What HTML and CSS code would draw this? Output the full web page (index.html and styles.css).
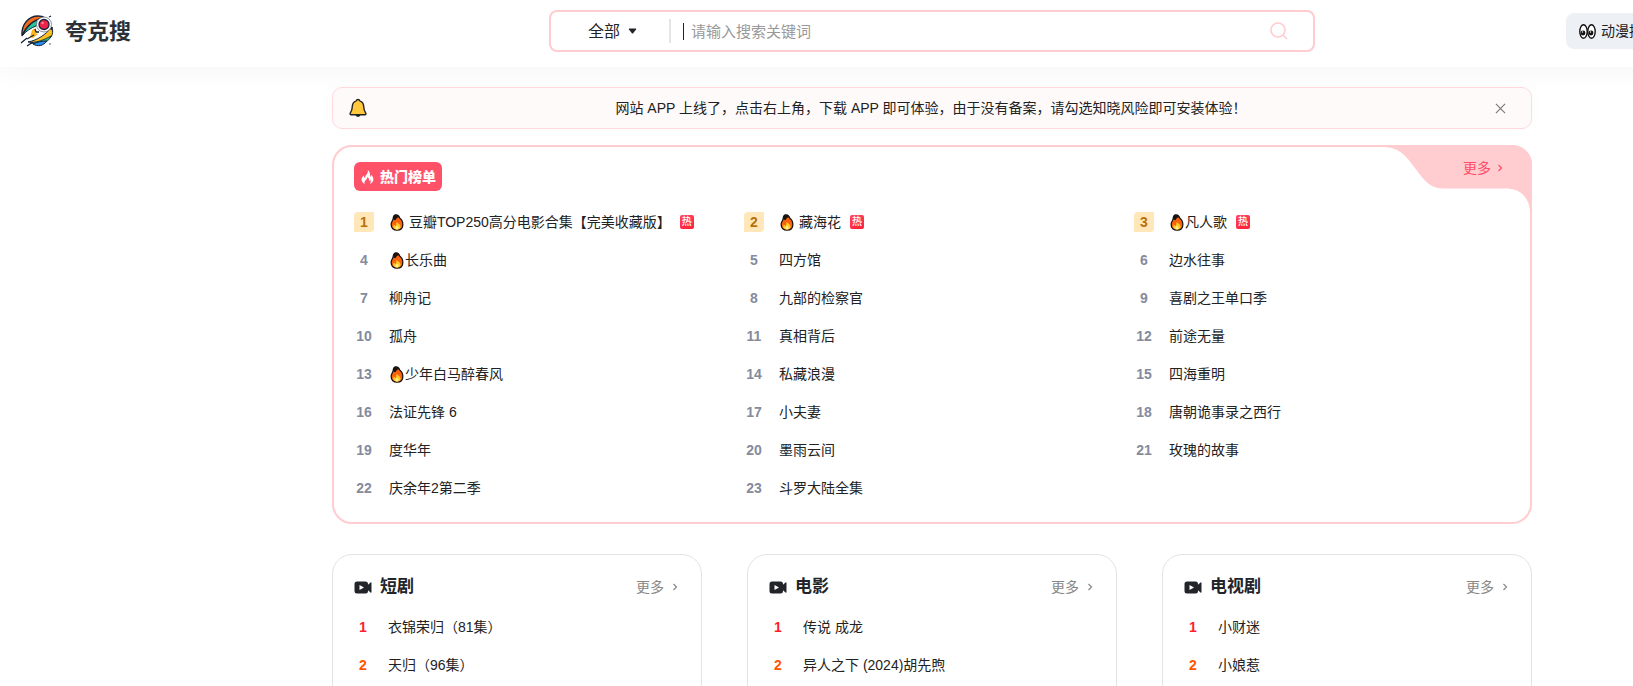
FILE: index.html
```html
<!DOCTYPE html>
<html lang="zh-CN">
<head>
<meta charset="utf-8">
<title>夸克搜</title>
<link rel="stylesheet" href="styles.css">
</head>
<body>
<svg class="sprite" aria-hidden="true">
  <symbol id="fire" viewBox="0 0 14 18">
    <path d="M5.2 1C7.800.600 9.200 2 9.800 4.200 12 5.800 13.200 8.400 13.200 11.200c0 3.800-2.600 6-6.200 6S.800 14.800.800 11.200C.800 8.800 2 7.200 2.800 5.600 3 3.600 3.400 1.600 5.200 1z" fill="#f7630c" stroke="#111" stroke-width="1.300"/>
    <path d="M3 5.500C3 3 4 1.200 6 1.100c1.600 0 2.600 1 3 2.600-1.600 0-2.600.4-3 2-1 1-2 .8-3-.2z" fill="#181210"/>
    <path d="M6.400 8.400c2 1.200 4.400 3 4.400 5.200 0 2-1.600 2.900-3.800 2.900S3 15.600 3 13.600c0-1 .2-1.600.6-2.400l1.800 1.600c.8-1.200 1.200-2.800 1-4.400z" fill="#ffc928"/>
    <path d="M7 12.400c1 .8 1.800 1.600 1.800 2.500 0 1-.8 1.500-1.800 1.500s-1.800-.5-1.800-1.500c0-.9.800-1.700 1.800-2.500z" fill="#fff08a"/>
  </symbol>
  <symbol id="video" viewBox="0 0 18 13">
    <path d="M3 .5h8.500A2.500 2.500 0 0 1 14 3v.8L16.500 1.500q1-.6 1 .6v8.800q0 1.200-1 .6L14 9.200V10a2.500 2.500 0 0 1-2.500 2.500H3A2.500 2.500 0 0 1 .5 10V3A2.500 2.500 0 0 1 3 .5zM5.500 4v5L10 6.500z" fill="#212529" fill-rule="evenodd"/>
  </symbol>
  <symbol id="chevron" viewBox="0 0 6 8">
    <path d="M1.500 1l3 3-3 3" fill="none" stroke="currentColor" stroke-width="1.200"/>
  </symbol>
</svg>
<div class="page">
  <header class="header">
    <a class="brand" href="#">
      <svg class="brand-logo" viewBox="0 0 34 32" aria-hidden="true">
        <path d="M2 21C1 9 9 1 18 1c3 0 5 .5 6 1.500C14 5 6 11 2 21z" fill="#f26a1b" stroke="#16233b" stroke-width="1.300"/>
        <path d="M3 20C7 12 12 7 18 5l-2 6C11 13 6 16 3 20z" fill="#24c79b" stroke="#16233b"/>
        <path d="M12 15l4-2-1 5 3 1-5 4-3-1z" fill="#ffb31a"/>
        <path d="M8 27c10-2 17-7 24-15 1 4 1 7-1 10-7 5-15 6-23 5z" fill="#ffc01f" stroke="#16233b"/>
        <path d="M10 28c8-1 14-3 21-7-1 3-3 5-6 6-5 2-10 2-15 1z" fill="#25b67f" stroke="#16233b" stroke-width=".8"/>
        <path d="M13 29c4-2 9-3 14-3-4 5-9 6-14 3z" fill="#2690ee" stroke="#16233b"/>
        <path d="M17 5c0 6 3 12 8 13l6-5-2-10z" fill="#fff"/>
        <circle cx="24" cy="9.500" r="7.500" fill="#fff" stroke="#6b7485" stroke-width=".8"/>
        <circle cx="24" cy="9.500" r="5" fill="#ed2447" stroke="#16233b" stroke-width="1.300"/>
        <circle cx="22.500" cy="8" r="1.300" fill="#ff7f8d"/>
        <path d="M15 14l1 3h3M7 24l7-4M1 28l6-5M7 31l6-4M29 2l2-1M31 15l1-3" fill="none" stroke="#16233b" stroke-width="1.300"/>
        <circle cx="30" cy="29" r="1" fill="#8a93a0"/>
      </svg>
      <span class="brand-name">夸克搜</span>
    </a>
    <form class="search">
      <select class="search-type" aria-label="搜索分类"><option>全部</option></select>
      <svg class="search-caret" viewBox="0 0 8 6" aria-hidden="true"><path d="M1 .5h6q1 0 .6.900L4.800 5q-.8 1-1.600 0L.4 1.400Q0 .5 1 .5z" fill="#212529"/></svg>
      <span class="search-divider"></span>
      <span class="search-cursor"></span>
      <input class="search-input" type="text" aria-label="搜索" placeholder="请输入搜索关键词">
      <button class="search-button" type="submit" aria-label="搜索">
        <svg viewBox="0 0 18 18" aria-hidden="true"><circle cx="8" cy="8" r="7" /><path d="M13 13l4 4"/></svg>
      </button>
    </form>
    <a class="nav-chip" href="#">
      <svg viewBox="0 0 17 15" aria-hidden="true">
        <g fill="#fff" stroke="#111" stroke-width="1.400"><ellipse cx="4.500" cy="7.500" rx="3.700" ry="6.700"/><ellipse cx="12.500" cy="7.500" rx="3.700" ry="6.700"/></g>
        <circle cx="4" cy="9" r="2.400" fill="#111"/><circle cx="12" cy="9" r="2.400" fill="#111"/>
        <circle cx="3.500" cy="8" r=".7" fill="#fff"/><circle cx="11.500" cy="8" r=".7" fill="#fff"/>
      </svg>
      <span>动漫推荐</span>
    </a>
  </header>

  <main class="main">
    <div class="notice">
      <svg class="notice-bell" viewBox="0 0 18 20" aria-hidden="true">
        <path d="M6.500 16.500a2.500 2.500 0 0 0 5 0z" fill="#222"/>
        <path d="M9 1.500c1 0 1.600.6 1.800 1.300C13.400 3.600 14.600 5.800 14.700 8.500c.1 3.500.6 4.700 2 6.500.6 1 .2 1.700-.9 1.700H2.200c-1.100 0-1.500-.7-.9-1.700 1.400-1.800 1.900-3 2-6.500.1-2.700 1.300-4.900 3.900-5.700C7.400 2.100 8 1.500 9 1.500z" fill="#ffc83d" stroke="#222" stroke-width="1.400"/>
      </svg>
      <p class="notice-text">网站 APP 上线了，点击右上角，下载 APP 即可体验，由于没有备案，请勾选知晓风险即可安装体验！</p>
      <button class="notice-close" type="button" aria-label="关闭"><svg viewBox="0 0 12 12" aria-hidden="true"><path d="M1 1l10 10M11 1L1 11"/></svg></button>
    </div>

    <section class="hot">
      <svg class="hot-tab" viewBox="0 0 152 68" aria-hidden="true"><path d="M0 0H132A20 20 0 0 1 152 20V68H150C150 53 140 43.500 127 43.500H63C54 43.500 47 39 41 31L28 14C21 6 14 2 3 2H0Z" fill="#ffcccf"/></svg>
      <a class="hot-more" href="#">更多 <svg class="chevron"><use href="#chevron"/></svg></a>
      <h2 class="hot-title">
        <svg viewBox="0 0 13 14" aria-hidden="true"><path d="M6.800 0C7.300 2.400 6.200 3.900 5 5.200 4.200 6.200 4 7 4.300 8.200 3.300 7.700 2.900 6.700 3 5.400 1.300 6.600.4 8.200.6 10 .8 11.800 2 13.200 3.600 14 3 12 4 10.800 5.200 9.600c.7-.7 1.200-1.500 1.200-2.500 1.500 1 2 2.300 1.500 3.900.7-.2 1.100-.7 1.300-1.500.9 1.600.6 3.100-.4 4.500 2-.8 3.500-2.300 3.600-4.500.1-2-1-3.500-2.200-4.800-.1 1-.4 1.600-1.100 2C9.300 4.200 8.800 1.600 6.800 0z" fill="#fff"/></svg>
        <span>热门榜单</span>
      </h2>
      <ol class="hot-list">
        <li><b class="rank top">1</b><a href="#"><svg class="fire"><use href="#fire"/></svg> 豆瓣TOP250高分电影合集【完美收藏版】</a><i class="tag">热</i></li>
        <li><b class="rank top">2</b><a href="#"><svg class="fire"><use href="#fire"/></svg> 藏海花</a><i class="tag">热</i></li>
        <li><b class="rank top">3</b><a href="#"><svg class="fire"><use href="#fire"/></svg>凡人歌</a><i class="tag">热</i></li>
        <li><b class="rank">4</b><a href="#"><svg class="fire"><use href="#fire"/></svg>长乐曲</a></li>
        <li><b class="rank">5</b><a href="#">四方馆</a></li>
        <li><b class="rank">6</b><a href="#">边水往事</a></li>
        <li><b class="rank">7</b><a href="#">柳舟记</a></li>
        <li><b class="rank">8</b><a href="#">九部的检察官</a></li>
        <li><b class="rank">9</b><a href="#">喜剧之王单口季</a></li>
        <li><b class="rank">10</b><a href="#">孤舟</a></li>
        <li><b class="rank">11</b><a href="#">真相背后</a></li>
        <li><b class="rank">12</b><a href="#">前途无量</a></li>
        <li><b class="rank">13</b><a href="#"><svg class="fire"><use href="#fire"/></svg>少年白马醉春风</a></li>
        <li><b class="rank">14</b><a href="#">私藏浪漫</a></li>
        <li><b class="rank">15</b><a href="#">四海重明</a></li>
        <li><b class="rank">16</b><a href="#">法证先锋 6</a></li>
        <li><b class="rank">17</b><a href="#">小夫妻</a></li>
        <li><b class="rank">18</b><a href="#">唐朝诡事录之西行</a></li>
        <li><b class="rank">19</b><a href="#">度华年</a></li>
        <li><b class="rank">20</b><a href="#">墨雨云间</a></li>
        <li><b class="rank">21</b><a href="#">玫瑰的故事</a></li>
        <li><b class="rank">22</b><a href="#">庆余年2第二季</a></li>
        <li><b class="rank">23</b><a href="#">斗罗大陆全集</a></li>
      </ol>
    </section>

    <div class="cards">
      <section class="card">
        <div class="card-head"><svg class="video"><use href="#video"/></svg><h2>短剧</h2><a class="card-more" href="#">更多 <svg class="chevron"><use href="#chevron"/></svg></a></div>
        <ol class="card-list">
          <li><b class="rank first">1</b><a href="#">衣锦荣归（81集）</a></li>
          <li><b class="rank second">2</b><a href="#">天归（96集）</a></li>
        </ol>
      </section>
      <section class="card">
        <div class="card-head"><svg class="video"><use href="#video"/></svg><h2>电影</h2><a class="card-more" href="#">更多 <svg class="chevron"><use href="#chevron"/></svg></a></div>
        <ol class="card-list">
          <li><b class="rank first">1</b><a href="#">传说 成龙</a></li>
          <li><b class="rank second">2</b><a href="#">异人之下 (2024)胡先煦</a></li>
        </ol>
      </section>
      <section class="card">
        <div class="card-head"><svg class="video"><use href="#video"/></svg><h2>电视剧</h2><a class="card-more" href="#">更多 <svg class="chevron"><use href="#chevron"/></svg></a></div>
        <ol class="card-list">
          <li><b class="rank first">1</b><a href="#">小财迷</a></li>
          <li><b class="rank second">2</b><a href="#">小娘惹</a></li>
        </ol>
      </section>
    </div>
  </main>
</div>
</body>
</html>
```
FILE: styles.css
```css
* { box-sizing: border-box; }

html { overflow: hidden; }

body {
  margin: 0;
  background: #fff;
  color: #222;
  font: 400 14px/20px "Liberation Sans", "Noto Sans CJK SC", sans-serif;
}

a { color: inherit; text-decoration: none; }
h2, p, ol { margin: 0; padding: 0; }
ol { list-style: none; }
svg { display: block; }
.sprite { position: absolute; width: 0; height: 0; }

/* The layout keeps its desktop width on narrower windows */
.page { min-width: 1864px; }

/* Header */
.header {
  display: grid;
  grid-template-columns: 1fr 766px 1fr;
  align-items: center;
  height: 67px;
  padding: 0 20px 5px;
  background: #fff;
  box-shadow: 0 0 30px rgba(0, 0, 0, 0.05);
}
.brand { display: flex; align-items: center; gap: 11px; }
.brand-logo { width: 34px; height: 32px; }
.brand-name { padding-top: 2px; color: #2b3138; font-size: 22px; line-height: 32px; font-weight: 700; }

.search {
  display: flex;
  align-items: center;
  height: 42px;
  border: 2px solid #ffcccf;
  border-radius: 8px;
}
.search-type {
  appearance: none;
  margin-left: 37px;
  width: 40px;
  padding: 1px 0 0;
  border: 0;
  background: none;
  color: #212529;
  font: inherit;
  font-size: 16px;
  line-height: 24px;
}
.search-caret { width: 9px; height: 6px; }
.search-divider { width: 2px; height: 24px; margin-left: 32px; background: #e5e5e5; }
.search-cursor { width: 1px; height: 17px; margin-left: 12px; background: #222; }
.search-input {
  flex: 1;
  padding: 2px 0 0 7px;
  border: 0;
  outline: 0;
  background: none;
  font: inherit;
  font-size: 15px;
}
.search-input::placeholder { color: #999; }
.search-button { padding: 0; margin-right: 25px; border: 0; background: none; }
.search-button svg { width: 18px; height: 18px; fill: none; stroke: #ffcccf; stroke-width: 1.6; }

.nav-chip {
  display: flex;
  align-items: center;
  gap: 5px;
  height: 36px;
  margin-left: 251px;
  padding: 0 13px;
  border-radius: 8px;
  background: #edf1f6;
}
.nav-chip svg { width: 17px; height: 15px; }

/* Content */
.main { width: 1200px; margin: 20px auto 0; }

.notice {
  display: flex;
  align-items: center;
  height: 42px;
  padding: 0 25px 0 16px;
  border: 1px solid #ffd9db;
  border-radius: 10px;
  background: #fffafa;
  box-shadow: 0 0 20px rgba(0, 0, 0, 0.02);
}
.notice-bell { width: 18px; height: 20px; }
.notice-text { flex: 1; text-align: center; }
.notice-close { padding: 0; border: 0; background: none; }
.notice-close svg { width: 11px; height: 11px; fill: none; stroke: #777; stroke-width: 1.2; }

.hot {
  position: relative;
  margin-top: 16px;
  padding: 15px 6px 24px 20px;
  border: 2px solid #ffcccf;
  border-radius: 20px;
  background: #fff;
}
.hot-tab { position: absolute; top: -2px; right: -2px; width: 152px; height: 68px; }
.hot-more {
  position: absolute;
  top: 11px;
  right: 27px;
  display: flex;
  align-items: center;
  gap: 6px;
  color: #ff4d67;
}
.chevron { width: 6px; height: 8px; }
.hot-title {
  display: flex;
  align-items: center;
  gap: 6px;
  width: max-content;
  height: 29px;
  padding: 0 6px 0 7px;
  border-radius: 6px;
  background: #ff5269;
  color: #fff;
  font-size: 14px;
  font-weight: 900;
}
.hot-title svg { width: 13px; height: 14px; }
.hot-list {
  display: grid;
  grid-template-columns: repeat(3, 1fr);
  gap: 18px 0;
  margin-top: 21px;
}
.hot-list li { display: flex; align-items: center; height: 20px; }
.hot-list a { margin: 0 9px 0 15px; white-space: nowrap; }
.rank {
  width: 20px;
  height: 20px;
  color: #858b9c;
  font-weight: 700;
  text-align: center;
}
.rank.top { border-radius: 4px 0 4px 0; background: #ffe7ba; color: #b9700b; }
.rank.first { color: #ff1f2d; }
.rank.second { color: #ff5500; }
.fire { display: inline-block; width: 16px; height: 17px; vertical-align: -4px; }
.tag {
  width: 14px;
  height: 14px;
  border-radius: 2px;
  background: linear-gradient(160deg, #ff4664, #ff1f35);
  color: #fff;
  font-size: 10px;
  line-height: 14px;
  font-style: normal;
  font-weight: 500;
  text-align: center;
}

.cards {
  display: grid;
  grid-template-columns: repeat(3, 1fr);
  gap: 45px;
  margin-top: 30px;
}
.card {
  padding: 20px 23px 40px 21px;
  border: 1px solid #e3e3e3;
  border-radius: 20px;
}
.card-head { display: flex; align-items: center; height: 24px; }
.card-head .video { width: 18px; height: 13px; margin-right: 8px; }
.card-head h2 { flex: 1; color: #212529; font-size: 17px; font-weight: 700; }
.card-more { display: flex; align-items: center; gap: 8px; color: #888; }
.card-list { display: grid; gap: 18px; margin-top: 18px; }
.card-list li { display: flex; gap: 16px; }
.card-list .rank { width: 18px; }
```
